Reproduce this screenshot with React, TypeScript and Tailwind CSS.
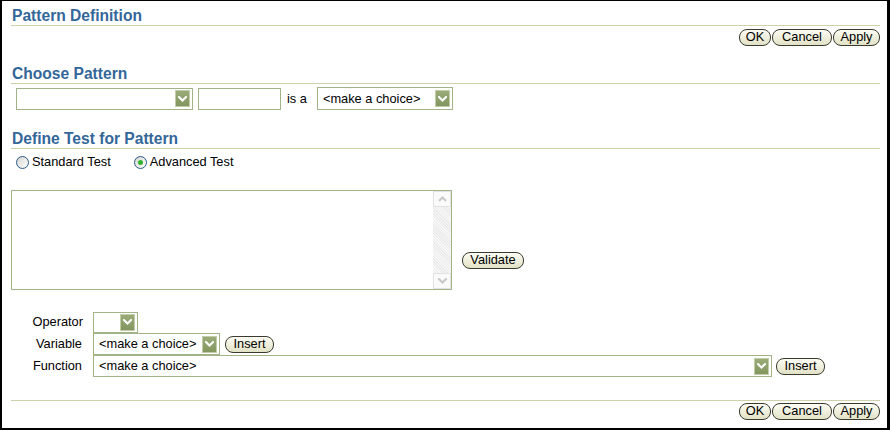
import React from "react";

const font = { fontFamily: '"Liberation Sans", Arial, sans-serif' };

function Chevron({ color = "#ffffff", w = 9, h = 6 }: { color?: string; w?: number; h?: number }) {
  return (
    <svg width={w} height={h} viewBox="0 0 9 6">
      <path d="M1 1 L4.5 4.5 L8 1" fill="none" stroke={color} strokeWidth="2" strokeLinecap="square" />
    </svg>
  );
}

function Select({ className, text }: { className: string; text?: string }) {
  return (
    <div className={`flex items-center border border-[#a3b388] bg-white pl-[5px] pr-[2px] ${className}`}>
      <span className="flex-1 whitespace-nowrap text-[12.8px] leading-[16px] text-black">{text}</span>
      <div className="flex h-[17px] w-[15px] shrink-0 items-center justify-center border border-[#c2cca8] bg-gradient-to-b from-[#9aab78] to-[#83965f]">
        <Chevron />
      </div>
    </div>
  );
}

function Btn({ className, children }: { className: string; children: React.ReactNode }) {
  return (
    <div
      className={`flex h-[17px] items-center justify-center rounded-[8px] border border-[#3a3a30] bg-gradient-to-b from-[#fcfcf4] to-[#e2e2c6] text-[12.8px] leading-none text-black ${className}`}
    >
      {children}
    </div>
  );
}

function Heading({ children, className = "" }: { children: React.ReactNode; className?: string }) {
  return (
    <div className={`border-b border-[#cdd2aa] pl-[1px] text-[15.6px] font-bold leading-[18px] text-[#336699] ${className}`}>
      {children}
    </div>
  );
}

function Radio({ checked }: { checked?: boolean }) {
  return (
    <div className="flex h-[13px] w-[13px] items-center justify-center rounded-full border border-[#2a5a8a] bg-gradient-to-br from-[#d6d6d0] to-[#ffffff]">
      {checked && <div className="h-[5px] w-[5px] rounded-full bg-[#2fb52f]" />}
    </div>
  );
}

function ActionButtons() {
  return (
    <div className="flex justify-end gap-[1px]">
      <Btn className="w-[32px]">OK</Btn>
      <Btn className="w-[60px]">Cancel</Btn>
      <Btn className="w-[47px]">Apply</Btn>
    </div>
  );
}

export default function App() {
  return (
    <div
      style={font}
      className="flex h-[430px] w-[890px] flex-col border-t border-l-2 border-r-[3px] border-b-2 border-black bg-white pl-[9px] pr-[7px] text-black"
    >
      <Heading className="pt-[6px]">Pattern Definition</Heading>
      <div className="mt-[3px]">
        <ActionButtons />
      </div>

      <Heading className="mt-[19px]">Choose Pattern</Heading>
      <div className="mt-[3px] flex items-center pl-[5px]">
        <Select className="h-[22px] w-[177px]" />
        <div className="ml-[5px] h-[22px] w-[83px] border border-[#a3b388] bg-white" />
        <span className="ml-[6px] text-[12.8px]">is a</span>
        <Select className="ml-[10px] h-[23px] w-[136px]" text="<make a choice>" />
      </div>

      <Heading className="mt-[20px]">Define Test for Pattern</Heading>
      <div className="mt-[6px] flex h-[14px] items-center pl-[5px] text-[12.8px]">
        <Radio />
        <span className="ml-[3px]">Standard Test</span>
        <div className="ml-[23px]">
          <Radio checked />
        </div>
        <span className="ml-[3px]">Advanced Test</span>
      </div>

      <div className="mt-[21px] flex items-end">
        <div className="flex h-[100px] w-[441px] justify-end border border-[#a3b388] bg-white">
          <div className="flex w-[18px] flex-col justify-between bg-[#f3f3f3] bg-[repeating-linear-gradient(45deg,#f7f7f7_0px,#f7f7f7_1px,#ebebeb_1px,#ebebeb_2px)]">
            <div className="flex h-[16px] items-center justify-center border border-[#e2e2e2] bg-[#fafafa]">
              <svg width="9" height="6" viewBox="0 0 9 6">
                <path d="M1 5 L4.5 1.5 L8 5" fill="none" stroke="#c8c8c8" strokeWidth="2" />
              </svg>
            </div>
            <div className="flex h-[16px] items-center justify-center border border-[#e2e2e2] bg-[#fafafa]">
              <Chevron color="#c8c8c8" />
            </div>
          </div>
        </div>
        <Btn className="mb-[21px] ml-[10px] w-[62px]">Validate</Btn>
      </div>

      <div className="mt-[21px] flex flex-col text-[12.8px]">
        <div className="flex h-[22px] items-center">
          <span className="w-[72px] text-right">Operator</span>
          <Select className="ml-[10px] h-[21px] w-[45px]" />
        </div>
        <div className="flex h-[22px] items-center">
          <span className="w-[71px] text-right">Variable</span>
          <Select className="ml-[11px] h-[22px] w-[127px]" text="<make a choice>" />
          <Btn className="ml-[5px] w-[49px]">Insert</Btn>
        </div>
        <div className="flex h-[22px] items-center">
          <span className="w-[71px] text-right">Function</span>
          <Select className="ml-[11px] h-[22px] w-[679px]" text="<make a choice>" />
          <Btn className="ml-[4px] w-[49px]">Insert</Btn>
        </div>
      </div>

      <div className="mt-[23px] border-t border-[#cdd2aa]" />
      <div className="mt-[2px]">
        <ActionButtons />
      </div>
    </div>
  );
}
